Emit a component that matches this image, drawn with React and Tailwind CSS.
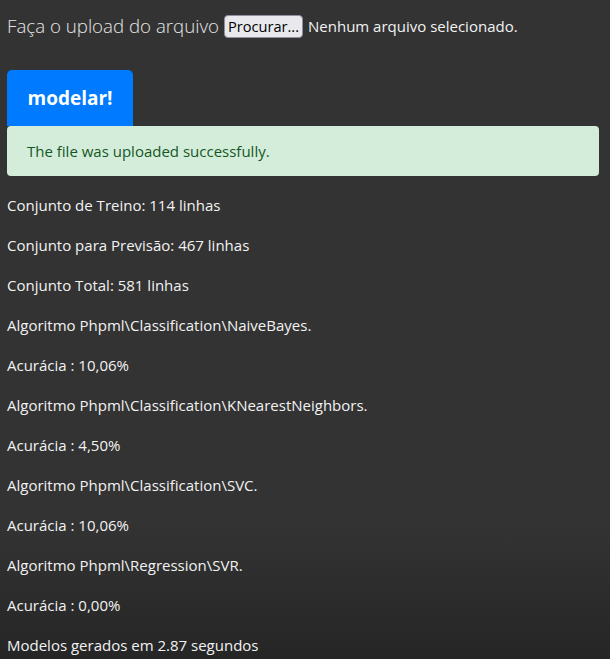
import React from 'react';

const lines = [
  'Conjunto de Treino: 114 linhas',
  'Conjunto para Previsão: 467 linhas',
  'Conjunto Total: 581 linhas',
  'Algoritmo Phpml\\Classification\\NaiveBayes.',
  'Acurácia : 10,06%',
  'Algoritmo Phpml\\Classification\\KNearestNeighbors.',
  'Acurácia : 4,50%',
  'Algoritmo Phpml\\Classification\\SVC.',
  'Acurácia : 10,06%',
  'Algoritmo Phpml\\Regression\\SVR.',
  'Acurácia : 0,00%',
  'Modelos gerados em 2.87 segundos',
];

const App = () => {
  return (
    <div className="min-h-[659px] bg-[linear-gradient(to_bottom,#333333_78%,#242424)] pl-[7px] pr-[11px] pt-[13px] pb-4 font-['Open_Sans',sans-serif] text-[#f2f2f2]">
      {/* Upload form */}
      <div className="flex items-center h-[26px]">
        <span className="text-[18.7px] font-light text-[#e6e6e6]">Faça o upload do arquivo</span>
        <button className="ml-[5px] h-[23px] px-[3px] bg-[#e9e9ed] border border-[#8f8f9d] rounded-[4px] text-[14.6px] leading-none text-black">
          Procurar...
        </button>
        <span className="ml-[5px] text-[15px]">Nenhum arquivo selecionado.</span>
      </div>

      <button className="mt-[31px] block w-[126px] h-[56px] bg-[#007bff] rounded-t-[5px] text-white text-[19px] font-bold">
        modelar!
      </button>

      {/* Alert */}
      <div className="h-[50px] flex items-center px-[20px] bg-[#d4edda] rounded-[4px] text-[#155724] text-[15px]">
        The file was uploaded successfully.
      </div>

      <div className="mt-[17px] flex flex-col gap-4">
        {lines.map((line, i) => (
          <p key={i} className="text-[15px] leading-6">{line}</p>
        ))}
      </div>
    </div>
  );
};

export default App;
